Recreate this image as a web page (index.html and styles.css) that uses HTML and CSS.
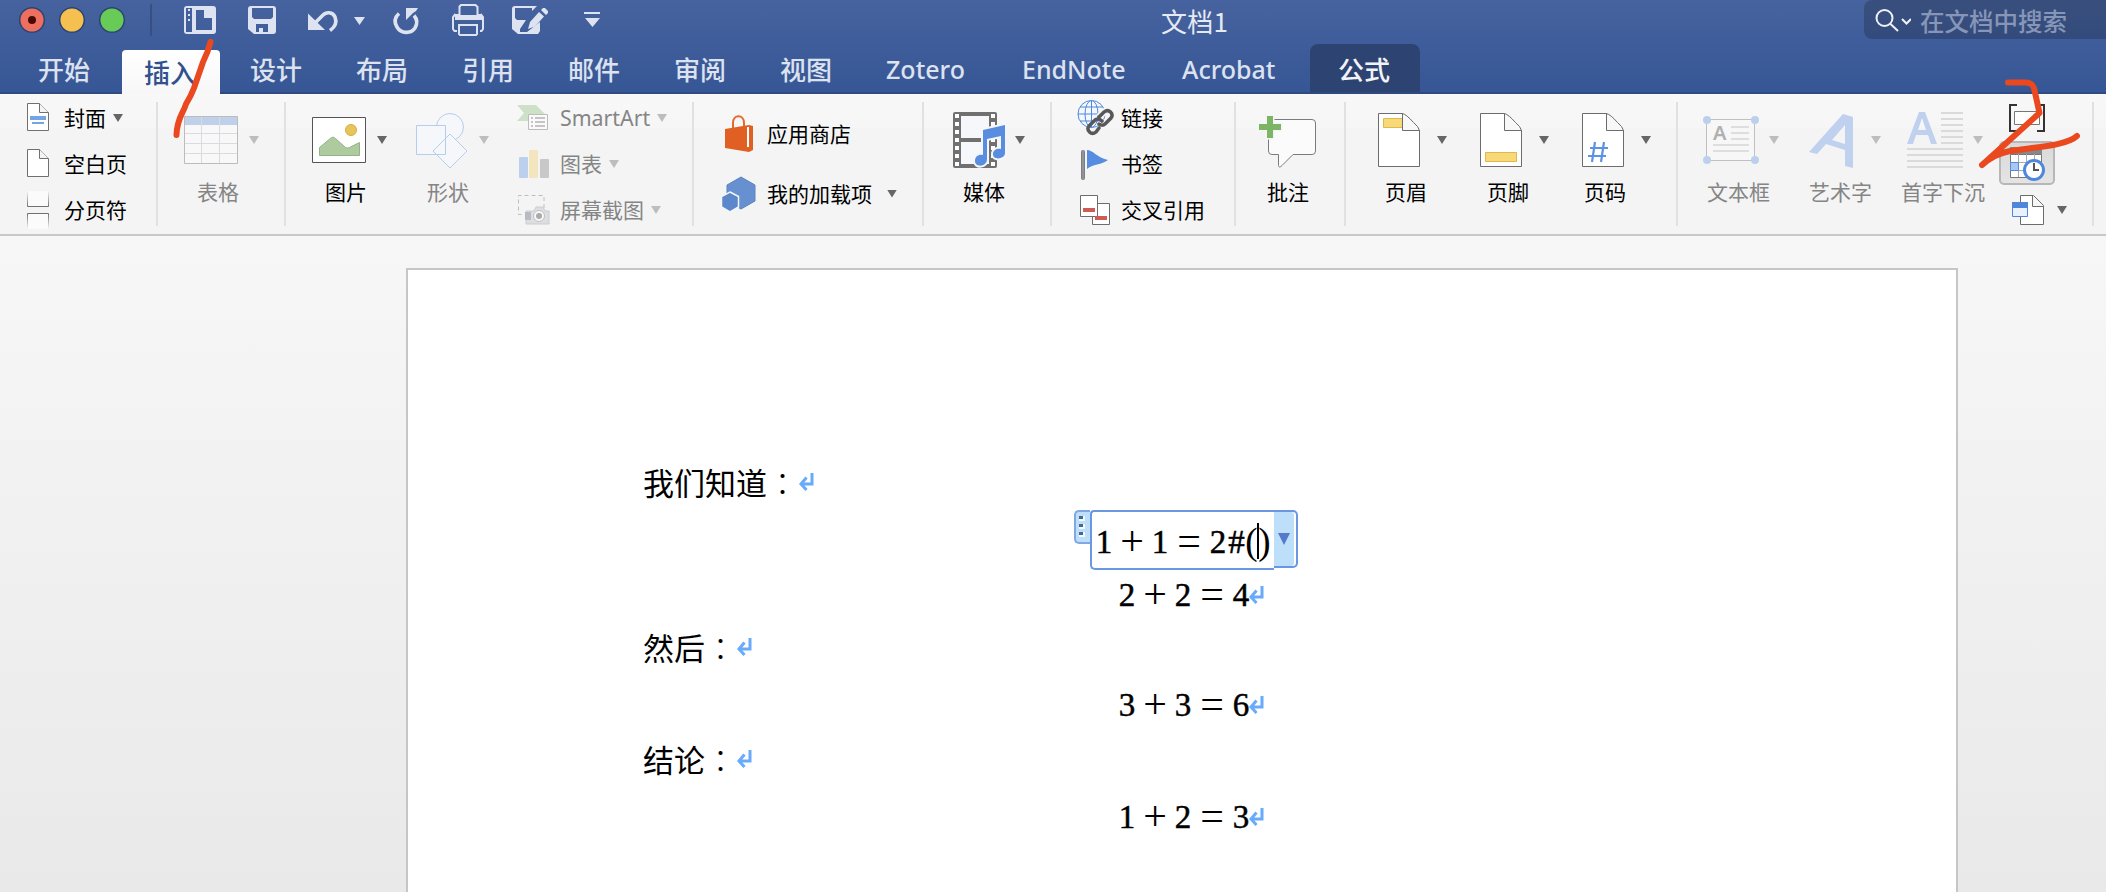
FILE: index.html
```html
<!DOCTYPE html>
<html lang="zh-CN">
<head>
<meta charset="utf-8">
<title>文档1</title>
<link rel="stylesheet" href="styles.css">
</head>
<body>
<div class="app">
  <header class="titlebar">
    <svg class="quick" width="620" height="40" viewBox="0 0 620 40">
      <g stroke="#2c4473" stroke-width="1.5">
        <circle cx="32" cy="20" r="12.3" fill="#ed6f60"/><circle cx="72" cy="20" r="12.3" fill="#f5c04f"/><circle cx="112" cy="20" r="12.3" fill="#68cb57"/>
      </g>
      <circle cx="32" cy="20" r="4" fill="#480a05"/>
      <rect x="150" y="4" width="2" height="32" fill="#375081"/>
      <g fill="#dde3f0">
        <path fill-rule="evenodd" d="M187 6h26a3 3 0 0 1 3 3v22a3 3 0 0 1-3 3h-26a3 3 0 0 1-3-3V9a3 3 0 0 1 3-3zm-1 2v24h6V8zm10 3v19h16V18h-8v-8h-8z"/>
        <path d="M206 10v6h6l-2-4z"/>
        <path d="M188 9h2v2h-2zm0 5h2v2h-2zm0 5h2v2h-2z"/>
        <path fill-rule="evenodd" d="M251 6h22a3 3 0 0 1 3 3v22a3 3 0 0 1-3 3h-19l-6-5V9a3 3 0 0 1 3-3zm1 2v9l2 2h17l2-2V8zm4 16v8h3v-4h4v4h5v-8z"/>
        <path d="M308 13.500V30h17z"/>
        <path d="M314 24L322 16C326 11 333 12 335 17C337 22 335 27 330 30.500" fill="none" stroke="#dde3f0" stroke-width="3.600"/>
        <path d="M354 17h11l-5.500 8z"/>
        <path d="M406 8h12l-2 3-3 2-7 7z"/>
        <path d="M399 13.500C395 17 394 22 397 27C401 34 411 34 415 28C418 23 417 19 414 15.500" fill="none" stroke="#dde3f0" stroke-width="3.600"/>
        <path d="M460 15h17v5h-17z"/>
        <g fill="none" stroke="#dde3f0" stroke-width="2"><path d="M459.500 18V6.500l1.500-1.500h14.500l2 2V18"/><path d="M457 31h-2.500l-1.500-2V17l2.500-3M480 31h1.500l1.500-2V17l-2.500-3"/><path d="M459 25h18v9l-1 1h-16l-1-1z"/></g>
        <path d="M455 14h5v5h17v-5h5v6h-27z"/>
        <path fill-rule="evenodd" d="M515 6h22l-5 5v-3h-17v10l2 2h9l-6 9v3h7l13-10v9l-2 3h-20l-6-5V9a3 3 0 0 1 3-3z"/>
        <path d="M528 29l2-7 9-10 5 4.500-9 10zM541 10l2-2h2l3 3v2l-2 2z"/>
        <path d="M584 12h16v2h-16zM585 18h15l-7.500 9z"/>
      </g>
    </svg>
    <h1 class="doc-title">文档1</h1>
    <div class="search">
      <svg width="36" height="26" viewBox="1875 6 36 26" fill="none" stroke="#eef1f7" stroke-width="2"><circle cx="1884.500" cy="17" r="8"/><path d="M1890.500 23l7.500 7M1902 18l4.500 4.500L1911 18"/></svg>
      <span>在文档中搜索</span>
    </div>
  </header>
  <nav class="tabs">
    <a class="tab">开始</a><a class="tab active">插入</a><a class="tab">设计</a><a class="tab">布局</a><a class="tab">引用</a><a class="tab">邮件</a><a class="tab">审阅</a><a class="tab">视图</a><a class="tab latin zotero">Zotero</a><a class="tab latin endnote">EndNote</a><a class="tab latin acrobat">Acrobat</a><a class="tab context">公式</a>
  </nav>

  <section class="ribbon">
    <div class="group g-pages">
      <div class="small"><svg width="30" height="32" viewBox="24 102 30 32"><path d="M27.500 103.500h12l9 9v18h-21z" fill="#fff" stroke="#707070"/><path d="M39.500 103.500v9h9" fill="#f4f4f4" stroke="#707070"/><path d="M30 116h16v4H30zM32 122h12v2H32z" fill="#74a3e8"/></svg><span>封面</span><i class="arrow"></i></div>
      <div class="small"><svg width="30" height="32" viewBox="24 102 30 32"><path d="M27.500 103.500h12l9 9v18h-21z" fill="#fff" stroke="#707070"/><path d="M39.500 103.500v9h9" fill="#f4f4f4" stroke="#707070"/></svg><span>空白页</span></div>
      <div class="small"><svg width="30" height="40" viewBox="24 190 30 40"><defs><linearGradient id="up" x1="0" y1="1" x2="0" y2="0"><stop offset="0" stop-color="#707070"/><stop offset="1" stop-color="#707070" stop-opacity="0"/></linearGradient><linearGradient id="down" x1="0" y1="0" x2="0" y2="1"><stop offset="0" stop-color="#707070"/><stop offset="1" stop-color="#707070" stop-opacity="0"/></linearGradient></defs><path d="M27.500 191v15.500h21V191" fill="#fbfbfb" stroke="url(#up)"/><path d="M27.500 229v-15.500h21V229" fill="#fbfbfb" stroke="url(#down)"/></svg><span>分页符</span></div>
    </div>
    <i class="sep"></i>
    <div class="group g-table">
      <div class="big off table"><svg width="80" height="72" viewBox="184 104 80 72"><path d="M184.500 116.500h53v47h-53z" fill="#f8f8f8" stroke="#bcbcbc"/><path d="M185 117h52v8h-52z" fill="#bfd0ea"/><path d="M185 133.500h52M185 143.500h52M185 153.500h52M201.500 117v46M219.500 117v46" stroke="#d9dbdf"/><path d="M249 136h10l-5 8z" fill="#bdbdbd"/></svg><span>表格</span></div>
    </div>
    <i class="sep"></i>
    <div class="group g-illus">
      <div class="big picture"><svg width="80" height="72" viewBox="312 104 80 72"><path d="M312.500 117.500h53v45h-53z" fill="#fff" stroke="#555"/><path d="M319.500 155.500v-8l12-10q2-1 4 1l10 9q2 1 4 0l10-5v13z" fill="#adcb9e" stroke="#94b486"/><circle cx="351" cy="130" r="5.500" fill="#e8c55b" stroke="#d6ae3b"/><path d="M377 136h10l-5 8z" fill="#666"/></svg><span>图片</span></div>
      <div class="big off shapes"><svg width="80" height="72" viewBox="416 104 80 72" fill="#f5f7fa" stroke="#b7cdee"><circle cx="450" cy="127" r="13.500"/><path d="M416.500 125.500h29v29h-29zM450 134l17 17-17 17-17-17z"/><path d="M479 136h10l-5 8z" fill="#bdbdbd" stroke="none"/></svg><span>形状</span></div>
      <div class="stack illus">
        <div class="small off"><svg width="34" height="32" viewBox="516 103 34 32"><path d="M517 106h19l9 9-7 7h-21l7-8z" fill="#cfe0c8"/><path d="M528.500 115.500h19v15h-19z" fill="#fafafa" stroke="#bcbcbc"/><path d="M531 119h2M531 123h2M531 127h2M535 119h10M535 123h10M535 127h10" stroke="#c5c5c5" stroke-width="2"/></svg><span class="latin smart">SmartArt</span><i class="arrow"></i></div>
        <div class="small off"><svg width="34" height="32" viewBox="516 148 34 32"><rect x="519" y="157" width="9" height="21" rx="1" fill="#bcd0ed"/><rect x="529" y="150" width="9" height="28" rx="1" fill="#f3e6bf"/><rect x="540" y="159" width="9" height="19" rx="1" fill="#c8c8c8"/></svg><span>图表</span><i class="arrow"></i></div>
        <div class="small off"><svg width="34" height="32" viewBox="516 196 34 32"><path d="M544 210v-12.500h-25.500v19h6" fill="none" stroke="#bebebe" stroke-dasharray="4 3"/><path d="M526 213h8l2-4h7l2 4h4v13h-23z" fill="#dcdee2" stroke="#c9ccd1"/><rect x="525" y="214" width="6" height="8" fill="#b7bbc2"/><circle cx="539" cy="218" r="5.500" fill="#f8f8f8" stroke="#c0c0c0"/><circle cx="539" cy="218" r="3" fill="#aaa"/></svg><span>屏幕截图</span><i class="arrow"></i></div>
      </div>
    </div>
    <i class="sep"></i>
    <div class="group g-addins">
      <div class="small"><svg width="36" height="40" viewBox="721 114 36 40"><path d="M733 128v-5c0-9 11-9 11 0v3" fill="none" stroke="#e8672a" stroke-width="2"/><path d="M725 129l24-4 4 1v24l-4 2-24-4z" fill="#e06023"/><path d="M747 127h2v20h-2z" fill="#fff"/></svg><span>应用商店</span></div>
      <div class="small"><svg width="36" height="40" viewBox="721 174 36 40"><path d="M741 177l14 8v16l-14 8-14-8v-16z" fill="#6690d0" stroke="#5c84c2"/><path d="M730 192l8.500 4.500v10.500l-8.500 5-8.500-5v-10.500z" fill="#5c87ca" stroke="#f4f6fa" stroke-width="1.500"/></svg><span>我的加载项</span><i class="arrow wide"></i></div>
    </div>
    <i class="sep"></i>
    <div class="group g-media">
      <div class="big media"><svg width="80" height="72" viewBox="953 104 80 72"><path d="M953 114a2 2 0 0 1 2-2h40a2 2 0 0 1 2 2v52a2 2 0 0 1-2 2h-40a2 2 0 0 1-2-2z" fill="#707070"/><path d="M961 116h28v22h-28zM961 142h28v22h-28z" fill="#f5f7fb"/><path d="M957 114v54M993 114v54" stroke="#fff" stroke-width="4" stroke-dasharray="4 4"/><path d="M983 130l22-5v28c0 6-12 8-12 1 0-4 4-6 8-5v-13l-14 3v20c0 8-12 9-12 2 0-5 4-7 8-6z" fill="#588ddf" stroke="#f4f6fa" stroke-width="4" paint-order="stroke"/><path d="M1015 136h10l-5 8z" fill="#666"/></svg><span>媒体</span></div>
    </div>
    <i class="sep"></i>
    <div class="group g-links">
      <div class="small"><svg width="38" height="40" viewBox="1076 99 38 40"><g fill="#f4f8fe" stroke="#4f88dc"><circle cx="1091.500" cy="115" r="13.500"/><ellipse cx="1091.500" cy="115" rx="6.500" ry="13.500"/><path d="M1078 115h27M1080 108h23M1080 122h23M1091.500 101.500v27"/></g><g fill="none" stroke="#f5f5f5" stroke-width="7"><path d="M1099 118l5-5c5-4 10 2 7 6l-7 6"/></g><g fill="none" stroke="#585858" stroke-width="3.500" stroke-linecap="round"><path d="M1099 118l5-5c5-4 10 2 7 6l-6 6c-2 2-5 1-6 0M1099 129l-3 4c-5 4-10-2-7-6l6-6c3-2 5-1 7 1"/></g></svg><span>链接</span></div>
      <div class="small"><svg width="38" height="34" viewBox="1076 147 38 34"><rect x="1081.500" y="150.500" width="3" height="29" rx="1" fill="#929297" stroke="#7d7d82"/><path d="M1087 150c6 0 9 7 21 10-6 5-16 4-21 9z" fill="#568de0"/></svg><span>书签</span></div>
      <div class="small"><svg width="38" height="34" viewBox="1076 193 38 34" fill="#fff" stroke="#6d6d6d"><path d="M1092.500 203.500h17v21h-17z"/><path d="M1080.500 195.500h17v21h-17z"/><path d="M1083 208h12v4h-12zM1095 216h12v4h-12z" fill="#cd5c55" stroke="none"/></svg><span>交叉引用</span></div>
    </div>
    <i class="sep"></i>
    <div class="group g-comment">
      <div class="big comment"><svg width="80" height="72" viewBox="1259 104 80 72"><path d="M1272 119.500h40a3.500 3.500 0 0 1 3.500 3.500v28a3.500 3.500 0 0 1-3.500 3.500h-19l-11 11q-3 3-3.500 0v-11h-6.500a3.500 3.500 0 0 1-3.500-3.500v-28a3.500 3.500 0 0 1 3.500-3.500z" fill="#fbfbfb" stroke="#7b7b7b"/><path d="M1267 116h6v8h8v6h-8v8h-6v-8h-8v-6h8z" fill="#7db567" stroke="#f5f5f5" stroke-width="3" paint-order="stroke"/></svg><span>批注</span></div>
    </div>
    <i class="sep"></i>
    <div class="group g-header">
      <div class="big head"><svg width="80" height="72" viewBox="1378 104 80 72"><path d="M1378.500 113.500h24l17 17v36h-41z" fill="#fff" stroke="#6c6c6c"/><path d="M1383.500 118.500h19v9h-19z" fill="#f7d977" stroke="#ddb94d"/><path d="M1402.500 113.500v17h17q-1-4-6-8-7-8-11-9z" fill="#f8f8f8" stroke="#6c6c6c"/><path d="M1437 136h10l-5 8z" fill="#666"/></svg><span>页眉</span></div>
      <div class="big foot"><svg width="80" height="72" viewBox="1378 104 80 72"><path d="M1378.500 113.500h24l17 17v36h-41z" fill="#fff" stroke="#6c6c6c"/><path d="M1383.500 152.500h31v9h-31z" fill="#f7d977" stroke="#ddb94d"/><path d="M1402.500 113.500v17h17q-1-4-6-8-7-8-11-9z" fill="#f8f8f8" stroke="#6c6c6c"/><path d="M1437 136h10l-5 8z" fill="#666"/></svg><span>页脚</span></div>
      <div class="big number"><svg width="80" height="72" viewBox="1378 104 80 72"><path d="M1378.500 113.500h24l17 17v36h-41z" fill="#fff" stroke="#6c6c6c"/><path d="M1391 142l-3 20M1400 142l-3 20M1386 148h18M1384 156h18" stroke="#5b92e4" stroke-width="2.200"/><path d="M1402.500 113.500v17h17q-1-4-6-8-7-8-11-9z" fill="#f8f8f8" stroke="#6c6c6c"/><path d="M1437 136h10l-5 8z" fill="#666"/></svg><span>页码</span></div>
    </div>
    <i class="sep"></i>
    <div class="group g-text">
      <div class="big off textbox"><svg width="80" height="72" viewBox="1702 104 80 72"><path d="M1706.500 119.500h48v41h-48z" fill="#f7f7f7" stroke="#c0c0c0"/><g fill="#bcd0ed"><circle cx="1707" cy="120" r="4"/><circle cx="1755" cy="120" r="4"/><circle cx="1707" cy="160" r="4"/><circle cx="1755" cy="160" r="4"/></g><text x="1713" y="140" class="icon-a-small">A</text><path d="M1731 127h18M1731 133h18M1731 139h18M1713 145h36M1713 151h36" stroke="#dedede" stroke-width="2"/><path d="M1769 136h10l-5 8z" fill="#bdbdbd"/></svg><span>文本框</span></div>
      <div class="big off wordart"><svg width="80" height="72" viewBox="1809 104 80 72"><path fill-rule="evenodd" d="M1809 152l34-38 10 3v51l-8-2v-16l-19-6-9 10zM1832 140l13 4v-19z" fill="#bfd1ee"/><path d="M1871 136h10l-5 8z" fill="#bdbdbd"/></svg><span>艺术字</span></div>
      <div class="big off dropcap"><svg width="80" height="72" viewBox="1907 104 80 72"><path fill-rule="evenodd" d="M1907 144l12-32h6l12 32h-6l-3-9h-12l-3 9zM1918 130h8l-4-12z" fill="#bfd1ee"/><path d="M1941 113h22M1941 119h22M1941 125h22M1941 131h22M1941 137h22M1941 143h22M1907 149h56M1907 155h56M1907 161h56M1907 167h56" stroke="#dadada" stroke-width="2"/><path d="M1973 136h10l-5 8z" fill="#bdbdbd"/></svg><span>首字下沉</span></div>
      <div class="stack fields">
        <div class="small"><svg width="58" height="32" viewBox="1998 102 58 32" fill="none"><path d="M2017 105h-7v26h7M2037 105h7v26h-7" stroke="#333" stroke-width="2"/><path d="M2014.500 111.500h25v13h-25z" fill="#fff" stroke="#777"/></svg></div>
        <div class="small"><svg width="58" height="46" viewBox="1998 142 58 46"><defs><linearGradient id="press" x1="0" y1="0" x2="0" y2="1"><stop stop-color="#d9d9d9"/><stop offset="1" stop-color="#e4e4e4"/></linearGradient></defs><rect x="2000" y="143" width="54" height="42" rx="4" fill="url(#press)" stroke="#b7b7b7" stroke-width="2"/><path d="M2010.500 155.500h31v23h-31z" fill="#fff" stroke="#777"/><path d="M2010 148h32v7h-32z" fill="#888"/><path d="M2018.500 155v23M2026.500 155v23M2034.500 155v23M2010 163.500h32M2010 171.500h32" stroke="#aaa"/><path d="M2010.500 163.500h8v8h-8z" fill="#a9c7f1" stroke="#518be0"/><circle cx="2034" cy="171" r="9.500" fill="#fff" stroke="#4f87dc" stroke-width="3"/><path d="M2034 164v7h5" fill="none" stroke="#555" stroke-width="2"/></svg></div>
        <div class="small"><svg width="58" height="34" viewBox="1998 193 58 34"><path d="M2020.500 195.500h13l10 10v19h-23z" fill="#fff" stroke="#6c6c6c"/><path d="M2032.500 195.500v11h11" fill="#f6f6f6" stroke="#6c6c6c"/><path d="M2012.500 202.500h15v14h-15z" fill="#e8f1fd" stroke="#4d86da"/><path d="M2012 202h16v6h-16z" fill="#4d86da"/></svg><i class="arrow tail"></i></div>
      </div>
    </div>
    <i class="sep"></i>
  </section>

  <main class="workspace">
    <article class="page">
      <p class="line l1">我们知道<b class="colon">：</b><svg class="ret" viewBox="0 0 16 20"><path d="M14 1v11H4M8.500 5.500L3 12l5.500 6"/></svg></p>
      <div class="line l2">
        <span class="handle"><i></i><i></i><i></i></span>
        <span class="eqbox"><b>1</b><em>+</em><b>1</b><em class="eq">=</em><b>2</b><b class="hash">#</b><span class="parens"><b>(</b><i class="caret"></i><b>)</b></span></span>
        <span class="drop"><i></i></span>
      </div>
      <p class="line math l3"><b>2</b><em>+</em><b>2</b><em class="eq">=</em><b>4</b><svg class="ret" viewBox="0 0 16 20"><path d="M14 1v11H4M8.500 5.500L3 12l5.500 6"/></svg></p>
      <p class="line l4">然后<b class="colon">：</b><svg class="ret" viewBox="0 0 16 20"><path d="M14 1v11H4M8.500 5.500L3 12l5.500 6"/></svg></p>
      <p class="line math l5"><b>3</b><em>+</em><b>3</b><em class="eq">=</em><b>6</b><svg class="ret" viewBox="0 0 16 20"><path d="M14 1v11H4M8.500 5.500L3 12l5.500 6"/></svg></p>
      <p class="line l6">结论<b class="colon">：</b><svg class="ret" viewBox="0 0 16 20"><path d="M14 1v11H4M8.500 5.500L3 12l5.500 6"/></svg></p>
      <p class="line math l7"><b>1</b><em>+</em><b>2</b><em class="eq">=</em><b>3</b><svg class="ret" viewBox="0 0 16 20"><path d="M14 1v11H4M8.500 5.500L3 12l5.500 6"/></svg></p>
    </article>
  </main>
  <!-- hand-drawn step marks -->
  <svg class="marks" width="2106" height="240" viewBox="0 0 2106 240"><path d="M210.500 42Q208 52 203 62L194 88Q191 96 186 104C183 114 177 118 176.500 135"/><path d="M2008 82.500h16Q2032 82 2034 88L2039.500 113 1982 165Q1994 154 2010 151C2035 147 2066 146 2077 136"/></svg>
</div>
</body>
</html>
```
FILE: styles.css
```css
* { box-sizing: border-box; }
body { margin: 0; overflow: hidden; font-family: "Noto Sans CJK SC", sans-serif; color: #000; }
svg { display: block; flex: none; }
i, em { font-style: normal; }
.app { position: relative; width: 2106px; height: 892px; display: flex; flex-direction: column; background: linear-gradient(#46639f, #375695 92px, #375695); }

/* title bar */
.titlebar { height: 44px; display: flex; flex: none; }
.doc-title { margin: 0 0 0 541px; width: 703px; font-size: 26px; font-weight: 400; line-height: 41px; color: #e6eaf3; letter-spacing: .3px; white-space: nowrap; }
.search { flex: 1; height: 39px; display: flex; align-items: center; gap: 9px; padding-left: 11px; background: linear-gradient(#39507e, #334b7c); border-radius: 8px 0 0 8px; }
.search span { font-size: 24.500px; line-height: 36px; margin-top: 3px; color: #8796b8; font-weight: 500; white-space: nowrap; }

/* tabs */
.tabs { height: 50px; flex: none; display: flex; align-items: flex-end; gap: 8px; padding-left: 16px; border-bottom: 2px solid #2e4a80; }
.tab { width: 98px; height: 48px; padding: 2px 22px 0; font-size: 26px; line-height: 45px; font-weight: 500; color: #dce2ef; white-space: nowrap; }
.tab.active { height: 44px; padding-top: 0; line-height: 43px; margin-bottom: -2px; background: linear-gradient(#fff, #f7f7f7); color: #31508f; border-radius: 4px 4px 0 0; }
.tab.latin { font-family: "Noto Sans", sans-serif; font-size: 25px; line-height: 46px; }
.tab.zotero { width: 128px; }
.tab.endnote { width: 152px; }
.tab.acrobat { width: 142px; }
.tab.context { width: 110px; padding: 2px 28px 0; background: #2d4372; color: #f2f4f9; border-radius: 8px 8px 0 0; }

/* ribbon */
.ribbon { height: 142px; flex: none; display: flex; background: linear-gradient(#f8f8f8, #f6f6f6 34px, #f4f4f4 34px); border-bottom: 2px solid #c8c8c8; }
.sep { width: 2px; height: 124px; margin-top: 8px; background: #e1e1e1; flex: none; }
.group { flex: none; display: flex; height: 140px; }
.g-pages { width: 156px; flex-direction: column; padding: 1px 0 0 24px; }
.g-table { width: 126px; }
.g-illus { width: 406px; }
.g-addins { width: 228px; flex-direction: column; padding: 10px 0 0 27px; }
.g-addins .small { height: 60px; }
.g-media { width: 126px; }
.g-links { width: 182px; flex-direction: column; padding: 1px 0 0 24px; }
.g-comment { width: 108px; }
.g-header { width: 330px; }
.g-text { width: 414px; }
.small { height: 46px; flex: none; display: flex; align-items: center; font-size: 21px; line-height: 30px; white-space: nowrap; }
.small span { margin-top: -2px; }
.small svg { margin-right: 10px; }
.g-links .small svg { margin-right: 7px; }
.off { color: #858585; }
.arrow { width: 10px; height: 8px; margin: 0 0 0 7px; background: #666; clip-path: polygon(0 0, 100% 0, 50% 100%); flex: none; }
.off .arrow { background: #bdbdbd; }
.arrow.wide { margin-left: 15px; margin-top: -1px; }
.arrow.tail { margin-left: -9px; }
.small .smart { font-family: "Noto Sans", sans-serif; font-size: 21.300px; width: 90px; margin-top: 0; }
.stack { display: flex; flex-direction: column; padding-top: 1px; }
.big { flex: none; padding-top: 10px; font-size: 21px; line-height: 28px; white-space: nowrap; }
.big span { display: block; margin-top: 1px; }
.table { margin-left: 26px; }
.table span { margin-left: 13px; }
.picture { margin-left: 26px; width: 104px; }
.picture span { margin-left: 13px; }
.shapes { width: 100px; }
.shapes span { margin-left: 11px; }
.media { margin-left: 29px; }
.media span { margin-left: 10px; }
.comment { margin-left: 23px; }
.comment span { margin-left: 8px; }
.head { margin-left: 32px; width: 102px; }
.foot { width: 102px; }
.head span, .foot span { margin-left: 7px; }
.number span { margin-left: 2px; }
.textbox { margin-left: 24px; width: 107px; }
.textbox span { margin-left: 5px; }
.wordart { width: 98px; }
.wordart span { margin-left: 0; }
.dropcap { width: 91px; }
.dropcap span { margin-left: -6px; }
.icon-a-small { font: 600 20px "Noto Sans", sans-serif; fill: #b0b0b0; }

/* document */
.workspace { flex: 1; display: flex; min-height: 0; padding: 32px 0 0 406px; background: linear-gradient(#f7f7f7, #e9e9e9); }
.page { width: 1552px; background: #fff; border: 2px solid #c6c6c6; border-bottom: 0; padding-top: 187px; }
.line { display: flex; align-items: center; margin: 0; font-size: 31px; white-space: nowrap; padding-left: 235px; line-height: 44px; }
.line b, .line em { font-weight: 400; }
.line .colon { font-family: "Noto Sans CJK TC", sans-serif; font-weight: 300; }
.l1 { height: 53px; padding-bottom: 3px; }
.l2 { height: 60px; padding-left: 666px; align-items: flex-start; }
.l3 { height: 50px; }
.l4 { height: 56px; padding-bottom: 3px; }
.l5 { height: 57px; }
.l6 { height: 55px; padding-bottom: 3px; }
.l7 { height: 58px; }
.ret { width: 16px; height: 20px; fill: none; stroke: #69abfb; stroke-width: 3; margin: 0; }
.math { padding-left: 710px; }
.math, .eqbox { font-family: "Liberation Serif", serif; font-size: 33px; -webkit-text-stroke: .5px #000; }
.math b, .eqbox b { width: 18px; text-align: center; }
.math em, .eqbox em { width: 38px; font-size: 42px; display: flex; justify-content: center; line-height: 40px; margin-top: -2px; -webkit-text-stroke: 0; }
.math .eq, .eqbox .eq { width: 40px; }
.math .ret { margin-left: -2px; }
.handle { width: 16px; height: 34px; background: #bedffa; border: 2px solid #82a8e4; border-right: 0; border-radius: 5px 0 0 5px; display: flex; flex-direction: column; gap: 5px; padding: 4px 0 0 3px; }
.handle i { width: 4px; height: 3px; background: #47678f; box-shadow: 1px 1px 0 1px #f2f9ff; }
.eqbox { width: 184px; height: 60px; border: 2px solid #6b97e2; border-right: 0; border-radius: 4px 0 0 5px; display: flex; align-items: center; padding: 4px 0 0 3px; }
.eqbox .hash { width: 19px; font-size: 33px; }
.parens { display: flex; align-items: center; width: 24px; -webkit-text-stroke: 0; }
.parens b { width: 11px; font-size: 37px; -webkit-text-stroke: 0; display: flex; justify-content: center; }
.caret { width: 2px; height: 36px; background: #000; flex: none; margin: -3px 0 0; }
.drop { width: 24px; height: 58px; border: 2px solid #6b97e2; border-left: 0; border-radius: 0 5px 5px 0; background: #bedffa; padding: 21px 0 0 4px; box-shadow: inset -2px 0 #fff; }
.drop i { display: block; width: 12px; height: 12px; background: #5579cb; clip-path: polygon(0 0, 100% 0, 50% 100%); }

.marks { position: absolute; left: 0; top: 0; fill: none; stroke: #ea4920; stroke-width: 6; stroke-linecap: round; stroke-linejoin: round; pointer-events: none; }
```
